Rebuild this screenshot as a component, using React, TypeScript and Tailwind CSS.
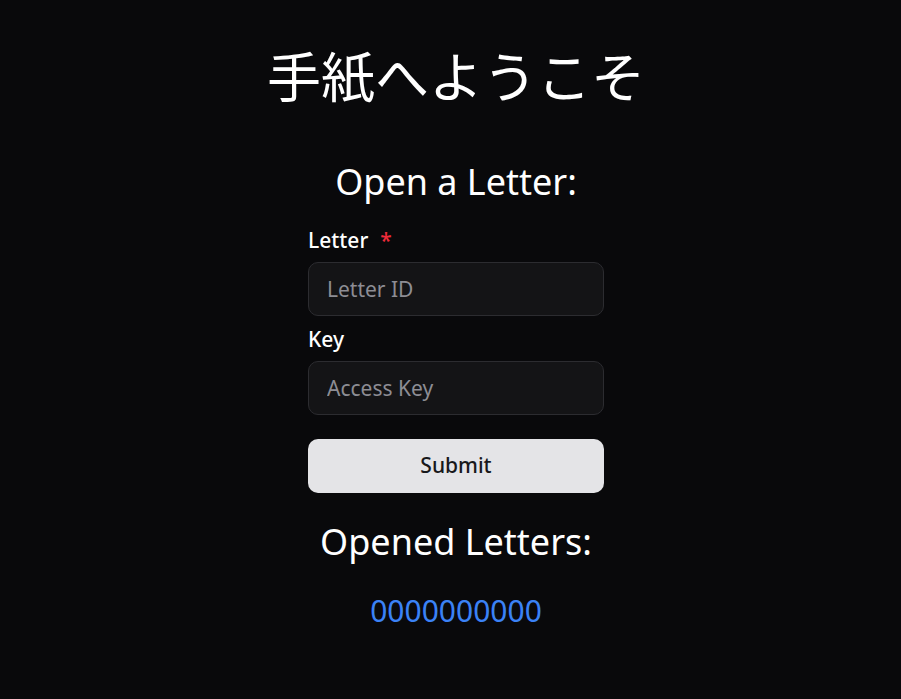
import { useState } from "react";

const font = { fontFamily: '"Noto Sans", "Noto Sans CJK JP", sans-serif' };

export default function App() {
  const [letterId, setLetterId] = useState("");
  const [accessKey, setAccessKey] = useState("");

  return (
    <main
      className="min-h-[699px] w-full bg-[#09090b] pl-[11px] text-white"
      style={font}
    >
      <div className="flex flex-col items-center pt-[50px]">
        <h1 className="text-[54px] leading-[54px] font-normal">手紙へようこそ</h1>

        <h2 className="mt-[58px] text-4xl font-normal">Open a Letter:</h2>

        <form
          className="mt-[24px] flex w-[296px] flex-col"
          onSubmit={(e) => e.preventDefault()}
        >
          <label htmlFor="letter" className="text-[21px] leading-7 font-medium">
            Letter
            <span className="ml-3 text-[#ef2b3a]">*</span>
          </label>
          <input
            id="letter"
            value={letterId}
            onChange={(e) => setLetterId(e.target.value)}
            placeholder="Letter ID"
            className="mt-2 h-[54px] rounded-[10px] border border-[#2c2c30] bg-[#141416] px-[18px] text-[21px] text-white placeholder:text-[#8d8d94] outline-none"
          />

          <label htmlFor="key" className="mt-[9px] text-[21px] leading-7 font-medium">
            Key
          </label>
          <input
            id="key"
            value={accessKey}
            onChange={(e) => setAccessKey(e.target.value)}
            placeholder="Access Key"
            className="mt-2 h-[54px] rounded-[10px] border border-[#2c2c30] bg-[#141416] px-[18px] text-[21px] text-white placeholder:text-[#8d8d94] outline-none"
          />

          <button
            type="submit"
            className="mt-[24px] h-[54px] rounded-[10px] bg-[#e4e4e7] text-[21px] font-medium text-[#18181b]"
          >
            Submit
          </button>
        </form>

        <h2 className="mt-[29px] text-4xl font-normal">Opened Letters:</h2>

        <a href="#" className="mt-[31px] text-3xl text-[#3b82f6]">
          0000000000
        </a>
      </div>
    </main>
  );
}
